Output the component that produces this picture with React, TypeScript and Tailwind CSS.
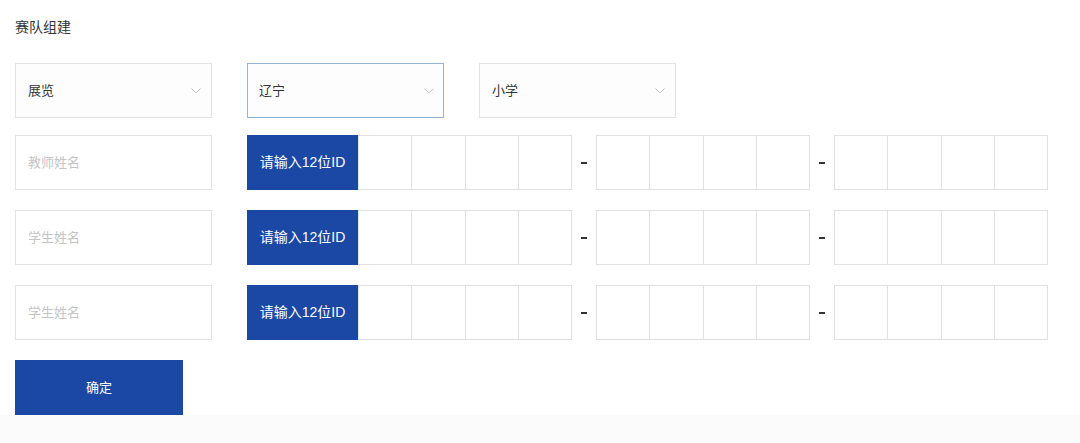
import React from 'react';

const font = { fontFamily: '"Liberation Sans", "Noto Sans CJK SC", sans-serif' };

function Chevron() {
  return (
    <svg width="10" height="6" viewBox="0 0 10 6" className="shrink-0">
      <path d="M0.5 0.5 L5 5 L9.5 0.5" fill="none" stroke="#c8c8c8" strokeWidth="1" />
    </svg>
  );
}

function Select({ label, active }: { label: string; active?: boolean }) {
  const cls = active
    ? 'w-[197px] h-[55px] flex items-center justify-between pl-[12px] pr-[10px] bg-[#fdfdfd] shadow-[inset_0_0_0_1px_#94b4d6]'
    : 'w-[197px] h-[55px] flex items-center justify-between pl-[12px] pr-[10px] bg-[#fdfdfd] border border-[#e3e3e3]';
  return (
    <div className={cls}>
      <span className="text-[13px] text-[#333]">{label}</span>
      <Chevron />
    </div>
  );
}

function Boxes() {
  return (
    <div className="w-[214px] h-full flex border border-[#e0e0e0]">
      {[0, 1, 2, 3].map((i) => (
        <div key={i} className={i > 0 ? 'flex-1 border-l border-[#e0e0e0]' : 'flex-1'} />
      ))}
    </div>
  );
}

function Dash() {
  return (
    <div className="w-[24px] flex items-center justify-center">
      <span className="block w-[6px] h-[2px] bg-[#333]" />
    </div>
  );
}

function MemberRow({ placeholder }: { placeholder: string }) {
  return (
    <div className="flex h-[55px]">
      <div className="w-[197px] h-full border border-[#e3e3e3] flex items-center pl-[12px]">
        <span className="text-[13px] text-[#c4c4c4]">{placeholder}</span>
      </div>
      <div className="ml-[35px] flex h-full">
        <div className="w-[111px] h-full bg-[#1c48a5] flex items-center justify-center text-white text-[14px]">
          请输入12位ID
        </div>
        <Boxes />
        <Dash />
        <Boxes />
        <Dash />
        <Boxes />
      </div>
    </div>
  );
}

export default function App() {
  return (
    <div className="w-[1080px] min-h-[443px] bg-[#fbfbfb]" style={font}>
      <div className="bg-white px-[15px] pt-[17px]">
        <h2 className="text-[14px] leading-[20px] text-[#333]">赛队组建</h2>
        <div className="mt-[26px] flex gap-[35px]">
          <Select label="展览" />
          <Select label="辽宁" active />
          <Select label="小学" />
        </div>
        <div className="mt-[17px] flex flex-col gap-[20px]">
          <MemberRow placeholder="教师姓名" />
          <MemberRow placeholder="学生姓名" />
          <MemberRow placeholder="学生姓名" />
        </div>
        <button className="mt-[20px] w-[168px] h-[55px] bg-[#1c48a5] text-white text-[13px] block">
          确定
        </button>
      </div>
    </div>
  );
}
